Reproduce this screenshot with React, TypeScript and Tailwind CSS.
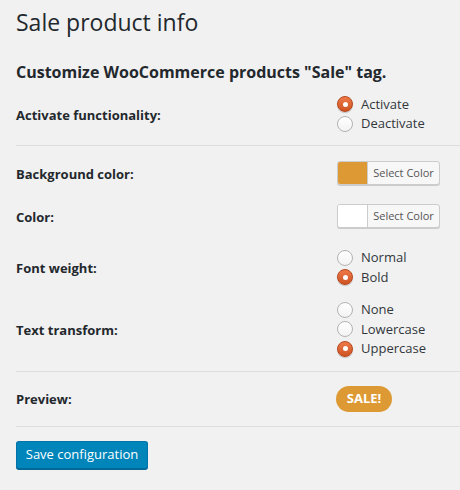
function Radio({ label, checked }: { label: string; checked?: boolean }) {
  return (
    <label className="flex h-[19.5px] items-center gap-2 text-[13px] text-[#32373c]">
      {checked ? (
        <span className="flex h-4 w-4 items-center justify-center rounded-full border border-[#b5461c] bg-gradient-to-b from-[#ee7a48] to-[#cf5322] shadow-[0_1px_1px_rgba(0,0,0,0.2)]">
          <span className="h-[5px] w-[5px] rounded-full bg-white" />
        </span>
      ) : (
        <span className="h-4 w-4 rounded-full border border-[#b3b3b3] bg-gradient-to-b from-white to-[#f3f3f3]" />
      )}
      <span>{label}</span>
    </label>
  );
}

function ColorButton({ color }: { color: string }) {
  return (
    <button className="flex h-6 w-[103px] overflow-hidden rounded-[3px] border border-[#cccccc] bg-[#f7f7f7] shadow-[0_1px_0_#cccccc]">
      <span className="h-full w-[30px] border-r border-[#cccccc]" style={{ backgroundColor: color }} />
      <span className="flex h-full flex-1 items-center justify-center text-[11px] text-[#555]">Select Color</span>
    </button>
  );
}

function Row({ label, children, className }: { label: string; children: React.ReactNode; className?: string }) {
  return (
    <div className={"flex items-center " + (className ?? "")}>
      <div className="w-[321px] pt-[3px] text-[13px] font-bold text-[#23282d]">{label}</div>
      <div>{children}</div>
    </div>
  );
}

export default function App() {
  return (
    <div className="min-h-[490px] w-[460px] bg-[#f1f1f1] pl-4 pt-[8px] font-['Open_Sans',sans-serif] text-[#23282d]">
      <h1 className="text-[23px] leading-[29px] font-normal">Sale product info</h1>
      <h2 className="mt-[24px] text-[16px] leading-[22px] font-bold">Customize WooCommerce products "Sale" tag.</h2>

      <Row label="Activate functionality:" className="h-[62px]">
        <div className="flex flex-col">
          <Radio label="Activate" checked />
          <Radio label="Deactivate" />
        </div>
      </Row>

      <div className="h-px bg-[#dddddd]" />

      <div className="pt-[15px] pb-[12px]">
        <Row label="Background color:">
          <ColorButton color="#dd9933" />
        </Row>
        <Row label="Color:" className="mt-[19px]">
          <ColorButton color="#ffffff" />
        </Row>
        <Row label="Font weight:" className="mt-[20px]">
          <div className="flex flex-col">
            <Radio label="Normal" />
            <Radio label="Bold" checked />
          </div>
        </Row>
        <Row label="Text transform:" className="mt-[13px]">
          <div className="flex flex-col">
            <Radio label="None" />
            <Radio label="Lowercase" />
            <Radio label="Uppercase" checked />
          </div>
        </Row>
      </div>

      <div className="h-px bg-[#dddddd]" />

      <div className="pt-[14px] pb-[14px]">
        <Row label="Preview:">
          <span className="-ml-px flex h-[26px] w-[56px] items-center justify-center rounded-full bg-[#dd9933] text-[13px] font-bold text-white">
            SALE!
          </span>
        </Row>
      </div>

      <div className="h-px bg-[#dddddd]" />

      <button className="mt-[14px] h-7 w-[132px] rounded-[3px] border border-[#0073aa] border-b-[#006799] bg-[#0085ba] text-[13px] text-white shadow-[0_1px_0_#006799]">
        Save configuration
      </button>
    </div>
  );
}
